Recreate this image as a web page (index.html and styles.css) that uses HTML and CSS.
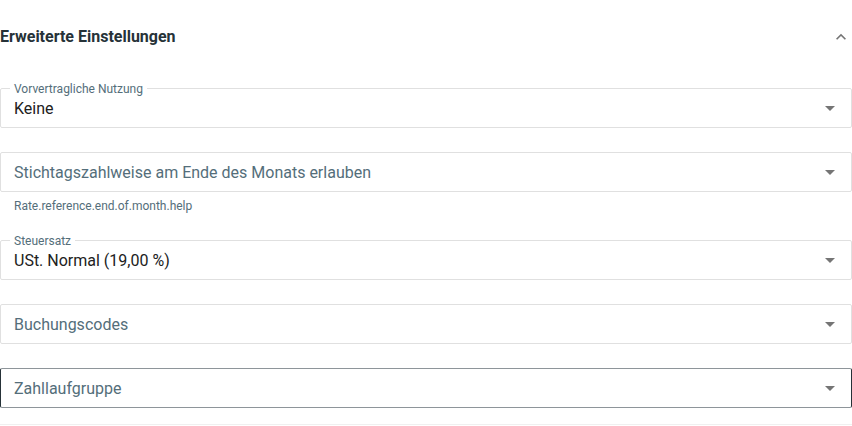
FILE: index.html
```html
<!DOCTYPE html>
<html lang="de">
<head>
<meta charset="utf-8">
<link rel="stylesheet" href="styles.css">
</head>
<body>
<section class="panel">
  <div class="header">
    <h2 class="title">Erweiterte Einstellungen</h2>
    <svg class="chev" viewBox="0 0 24 24" width="20" height="20"><path d="M12 8l-6 6 1.41 1.41L12 10.83l4.59 4.58L18 14z" fill="#757575"/></svg>
  </div>
  <div class="fields">
    <div class="field filled">
      <span class="label">Vorvertragliche Nutzung</span>
      <span class="value">Keine</span>
      <span class="arrow"></span>
    </div>
    <div class="group">
      <div class="field">
        <span class="placeholder">Stichtagszahlweise am Ende des Monats erlauben</span>
        <span class="arrow"></span>
      </div>
      <div class="helper">Rate.reference.end.of.month.help</div>
    </div>
    <div class="field filled">
      <span class="label">Steuersatz</span>
      <span class="value">USt. Normal (19,00 %)</span>
      <span class="arrow"></span>
    </div>
    <div class="field">
      <span class="placeholder">Buchungscodes</span>
      <span class="arrow"></span>
    </div>
    <div class="field hover">
      <span class="placeholder">Zahllaufgruppe</span>
      <span class="arrow"></span>
    </div>
  </div>
  <div class="divider"></div>
</section>
</body>
</html>
```
FILE: styles.css
```css
* { box-sizing: border-box; }
html, body { margin: 0; padding: 0; background: #fff; }
body { font-family: Roboto, "Noto Sans", sans-serif; color: #263238; width: 852px; overflow: hidden; }
.panel { display: flex; flex-direction: column; }
.header { height: 74px; display: flex; align-items: center; justify-content: space-between; padding-right: 1px; }
.title { margin: 0; font-size: 16px; line-height: 20px; font-weight: 700; color: #263238; letter-spacing: 0; }
.chev { display: block; }
.fields { margin-top: 14px; display: flex; flex-direction: column; gap: 24px; }
.field { position: relative; height: 40px; border: 1px solid #e0e0e0; border-radius: 2px; display: flex; align-items: center; padding: 1px 16px 0 13px; }
.field.hover { border-color: #8e959a #263238; }
.label { position: absolute; left: 9px; top: -6px; padding: 0 4px; background: #fff; font-size: 12px; line-height: 12px; color: #546e7a; }
.value { flex: 1; font-size: 16px; color: #212121; }
.placeholder { flex: 1; font-size: 16px; color: #546e7a; }
.arrow { width: 0; height: 0; border-left: 5px solid transparent; border-right: 5px solid transparent; border-top: 5px solid #757575; }
.helper { margin-top: 6px; padding-left: 14px; font-size: 12px; line-height: 16px; color: #546e7a; }
.group { display: flex; flex-direction: column; }
.group + .field { margin-top: 2px; }
.divider { margin-top: 16px; border-top: 1px solid #f0f0f0; }
```
